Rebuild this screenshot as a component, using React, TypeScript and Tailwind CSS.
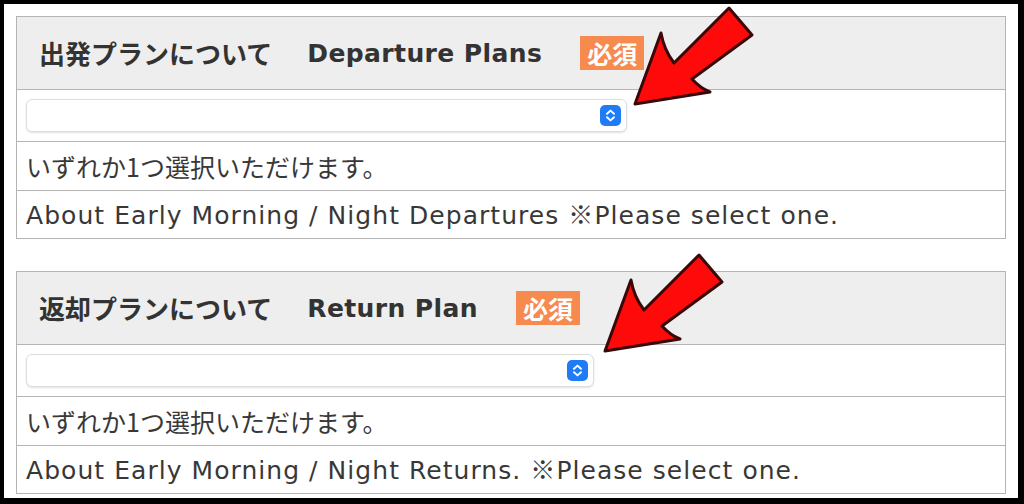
import React from 'react';

const bodyFont = "font-['DejaVu_Sans','Noto_Sans_CJK_JP',sans-serif]";
const jpFont = "font-['Noto_Sans_CJK_JP',sans-serif]";

function SelectBox({ width }: { width: string }) {
  return (
    <div
      className={`flex h-[33px] ${width} items-center justify-end rounded-[6px] border border-[#dedede] bg-white pr-[5px] shadow-[0_1px_2px_rgba(0,0,0,0.12)]`}
    >
      <div className="flex h-[21px] w-[21px] items-center justify-center rounded-[5px] bg-[#1f7cf5]">
        <svg width="21" height="21" viewBox="0 0 21 21" fill="none">
          <path d="M7 8.8 L10.5 5.6 L14 8.8" stroke="white" strokeWidth="1.9" strokeLinecap="round" strokeLinejoin="round" />
          <path d="M7 12.2 L10.5 15.4 L14 12.2" stroke="white" strokeWidth="1.9" strokeLinecap="round" strokeLinejoin="round" />
        </svg>
      </div>
    </div>
  );
}

function PlanSection({
  jp,
  en,
  selectWidth,
  note,
  about,
}: {
  jp: string;
  en: string;
  selectWidth: string;
  note: string;
  about: string;
}) {
  return (
    <div className="flex flex-col border border-[#b4b4b4]">
      {/* Header */}
      <div className="flex h-[72px] items-center bg-[#eeeeee] pl-[22px] text-[#333]">
        <span className={`${jpFont} text-[26px] font-bold leading-none`}>{jp}</span>
        <span className="ml-[35px] text-[25px] font-bold leading-none tracking-[0.4px]">{en}</span>
        <span
          className={`${jpFont} ml-[38px] flex h-[34px] items-center bg-[#f68a4f] px-[7px] text-[25px] font-bold leading-none text-white`}
        >
          必須
        </span>
      </div>

      {/* Select */}
      <div className="flex h-[52px] items-center border-t border-[#b4b4b4] px-[9px]">
        <SelectBox width={selectWidth} />
      </div>

      {/* Notes */}
      <div className="flex h-[49px] items-center border-t border-[#b4b4b4] px-[9px] text-[25px] leading-none">
        <span className={jpFont}>{note}</span>
      </div>
      <div className="flex h-[48px] items-center border-t border-[#b4b4b4] px-[9px] text-[25px] leading-none tracking-[1.05px]">
        <span>
          {about} <span className={jpFont}>※</span>Please select one.
        </span>
      </div>
    </div>
  );
}

export default function App() {
  return (
    <div className="relative h-[504px] w-[1024px] overflow-hidden bg-black">
      <div
        className={`${bodyFont} h-full w-full border-b-[6px] border-l-4 border-r-[6px] border-t-4 border-black bg-white px-3 pt-3 text-[#383838]`}
      >
        <div className="flex flex-col gap-8">
          <PlanSection
            jp="出発プランについて"
            en="Departure Plans"
            selectWidth="w-[601px]"
            note="いずれか1つ選択いただけます。"
            about="About Early Morning / Night Departures"
          />
          <PlanSection
            jp="返却プランについて"
            en="Return Plan"
            selectWidth="w-[568px]"
            note="いずれか1つ選択いただけます。"
            about="About Early Morning / Night Returns."
          />
        </div>
      </div>

      {/* red callout arrows */}
      <svg className="pointer-events-none absolute inset-0" width="1024" height="504" viewBox="0 0 1024 504">
        <g>
          <path
            d="M635 104 L661 33 Q664 50 674 63 L729 8 L752 35 L692 79 Q700 88 710 92 Z"
            fill="#ff0a0a"
            stroke="#3a0808"
            strokeWidth="3"
            strokeLinejoin="round"
          />
        </g>
        <g transform="translate(-30 247)">
          <path
            d="M635 104 L661 33 Q664 50 674 63 L729 8 L752 35 L692 79 Q700 88 710 92 Z"
            fill="#ff0a0a"
            stroke="#3a0808"
            strokeWidth="3"
            strokeLinejoin="round"
          />
        </g>
      </svg>
    </div>
  );
}
